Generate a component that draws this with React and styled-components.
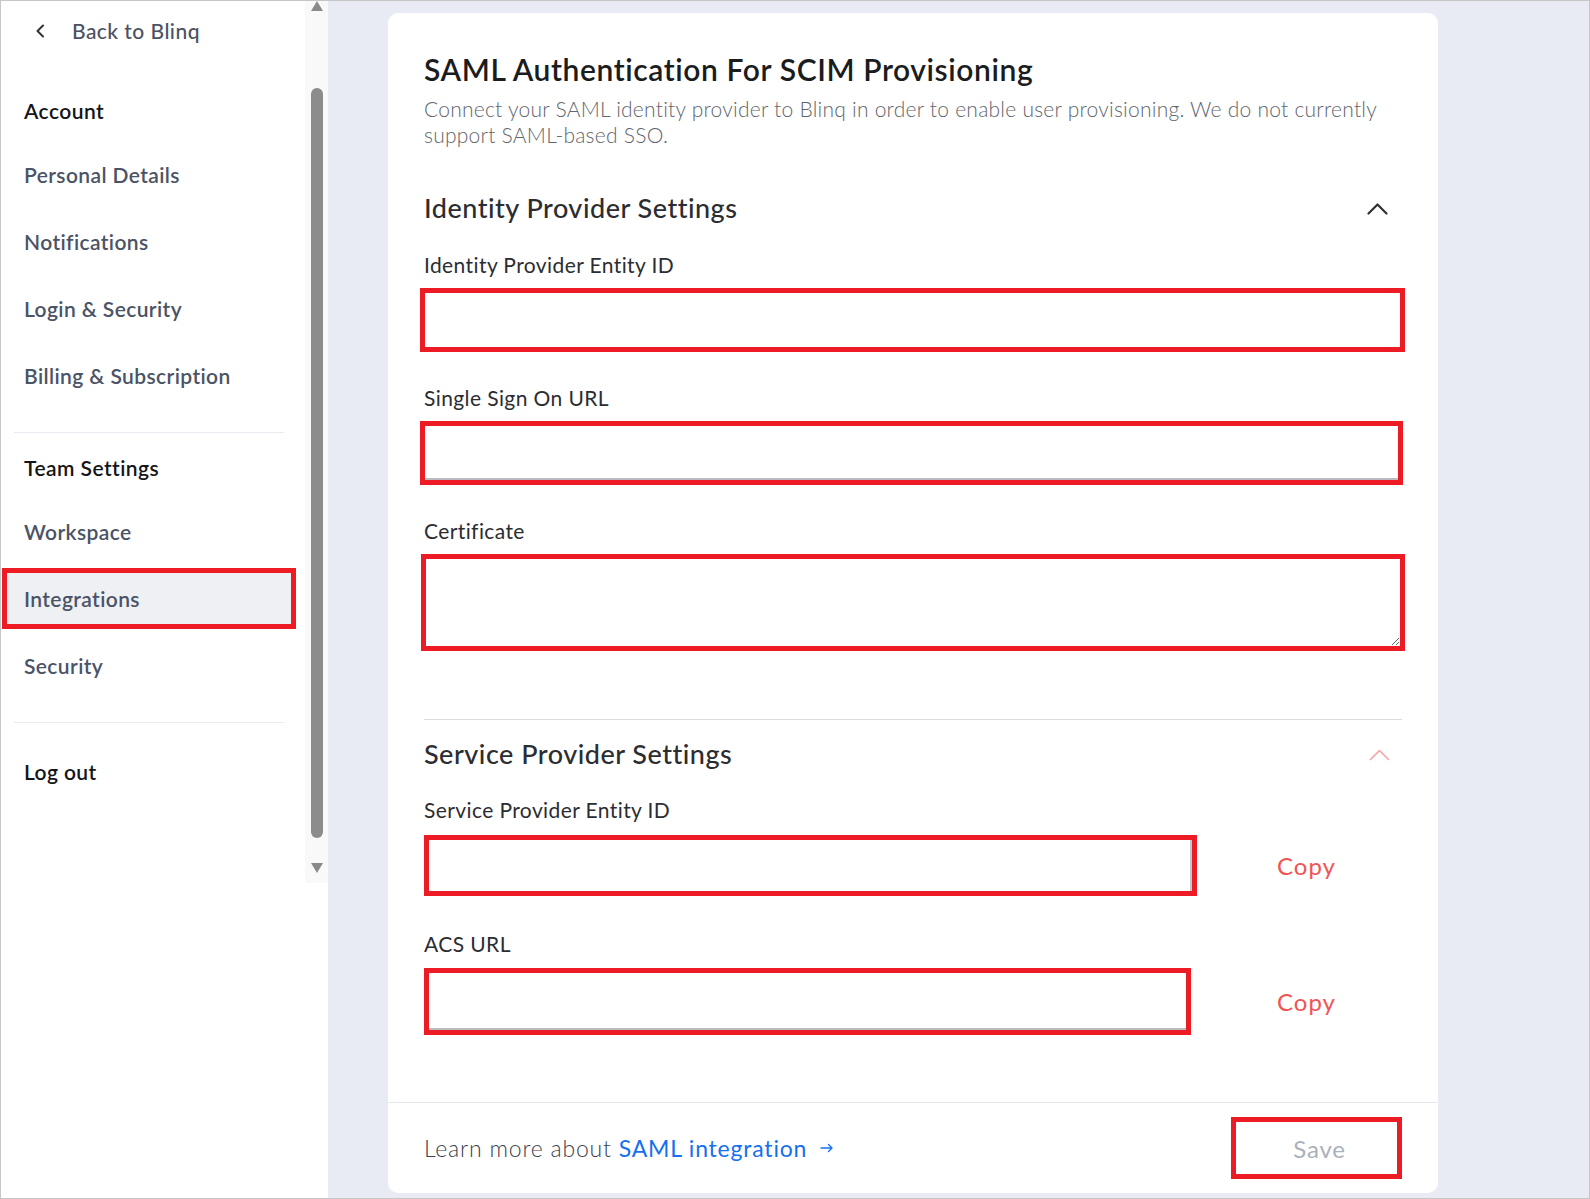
import React from "react";
import styled, { createGlobalStyle } from "styled-components";

const GlobalStyle = createGlobalStyle`
  html, body { margin: 0; padding: 0; background: #fff; }
  body { font-family: Lato, "Noto Sans", sans-serif; }
  *, *::before, *::after { box-sizing: border-box; }
`;

const RED = "#ed1c24";

const Frame = styled.div`
  width: 1590px;
  height: 1199px;
  border: 1px solid #c6c6c6;
  display: flex;
  overflow: hidden;
  background: #e9ebf4;
`;

const Sidebar = styled.aside`
  width: 327px;
  flex-shrink: 0;
  background: #fff;
  display: flex;
  align-items: flex-start;
`;

const Nav = styled.nav`
  width: 304px;
  padding: 18px 21px 0 13px;
  display: flex;
  flex-direction: column;
`;

const BackLink = styled.a`
  display: flex;
  align-items: center;
  gap: 27px;
  padding-left: 21px;
  height: 24px;
  font-size: 21px;
  line-height: 24px;
  font-weight: 500;
  letter-spacing: 0.45px;
  color: #4a5263;
  text-decoration: none;
  margin-bottom: 56px;
`;

const GroupHeading = styled.div`
  padding-left: 10px;
  font-size: 21px;
  line-height: 24px;
  font-weight: 600;
  letter-spacing: 0.45px;
  color: #141518;
  margin-bottom: 26px;
`;

const ItemList = styled.div`
  display: flex;
  flex-direction: column;
  gap: 16px;
`;

const NavItem = styled.div`
  height: 51px;
  margin: 0 -7px;
  padding-left: 17px;
  display: flex;
  align-items: center;
  font-size: 21px;
  line-height: 24px;
  letter-spacing: 0.4px;
  font-weight: 600;
  color: ${(p) => (p.$strong ? "#141518" : "#4b5366")};
  background: ${(p) => (p.$active ? "#eff0f4" : "transparent")};
  outline: ${(p) => (p.$active ? `5px solid ${RED}` : "none")};
`;

const NavDivider = styled.hr`
  border: none;
  height: 1px;
  background: #e9ebf0;
  margin: 31px 0 23px;
`;

const ScrollTrack = styled.div`
  width: 23px;
  height: 882px;
  background: #f9f9f9;
  display: flex;
  flex-direction: column;
  align-items: center;
`;

const ScrollThumb = styled.div`
  width: 12px;
  height: 750px;
  margin: 77px 0 25px;
  border-radius: 6px;
  background: #8c8c8c;
`;

const Main = styled.main`
  flex: 1;
  padding: 12px 0 0 60px;
`;

const Card = styled.section`
  width: 1050px;
  height: 1180px;
  background: #fff;
  border-radius: 10px;
  display: flex;
  flex-direction: column;
`;

const CardBody = styled.div`
  flex: 1;
  padding: 38px 36px 0;
  display: flex;
  flex-direction: column;
`;

const Title = styled.h1`
  margin: 0;
  font-size: 30px;
  line-height: 36px;
  font-weight: 600;
  letter-spacing: 0.6px;
  color: #1b1c1e;
`;

const Description = styled.p`
  margin: 9px 0 0;
  font-size: 21px;
  line-height: 26px;
  font-weight: 300;
  letter-spacing: 0.24px;
  color: #5f666d;
`;

const SectionHeader = styled.div`
  margin-top: ${(p) => p.$mt}px;
  height: 30px;
  display: flex;
  align-items: center;
  justify-content: space-between;
  padding-right: ${(p) => p.$pr}px;
`;

const SectionTitle = styled.h2`
  margin: 0;
  font-size: 27px;
  line-height: 30px;
  font-weight: 500;
  letter-spacing: 0.5px;
  color: #2b2d31;
`;

const Field = styled.div`
  margin-top: ${(p) => p.$mt}px;
  display: flex;
  flex-direction: column;
`;

const Label = styled.label`
  font-size: 21px;
  line-height: 24px;
  font-weight: 400;
  letter-spacing: 0.4px;
  color: #2b2d31;
  margin-bottom: ${(p) => p.$mb || 11}px;
`;

const TextInput = styled.input`
  display: block;
  flex-shrink: 0;
  height: ${(p) => p.$h || 64}px;
  width: ${(p) => p.$w || "calc(100% + 7px)"};
  margin-left: ${(p) => (p.$flush ? 0 : -4)}px;
  border: 5px solid ${RED};
  background: #fff;
  outline: none;
  padding: 0 12px;
  font: inherit;
  box-shadow: ${(p) =>
    p.$edge === "bottom"
      ? "inset 0 -2px 0 #b9bcc0"
      : p.$edge === "right"
      ? "inset -2px 0 0 #c3c6ca"
      : "none"};
`;

const TextArea = styled.textarea`
  display: block;
  height: 97px;
  width: calc(100% + 6px);
  margin-left: -3px;
  border: 5px solid ${RED};
  outline: none;
  padding: 8px 12px;
  font: inherit;
  resize: vertical;
`;

const Divider = styled.hr`
  border: none;
  height: 1px;
  background: #dcdcdc;
  margin: 68px 0 0;
`;

const CopyRow = styled.div`
  display: flex;
  align-items: center;
`;

const CopyButton = styled.button`
  flex: 1;
  padding: 0 0 0 ${(p) => p.$pl || 12}px;
  border: none;
  background: none;
  font-family: inherit;
  font-size: 24px;
  font-weight: 400;
  letter-spacing: 1px;
  color: #f05454;
  text-align: center;
  cursor: pointer;
`;

const Footer = styled.footer`
  height: 91px;
  border-top: 1px solid #e6e8ec;
  padding: 0 36px;
  display: flex;
  align-items: center;
  justify-content: space-between;
`;

const LearnMore = styled.div`
  display: flex;
  align-items: center;
  gap: 7px;
  font-size: 23px;
  font-weight: 300;
  letter-spacing: 0.8px;
  color: #3a414c;
`;

const LinkText = styled.a`
  color: #1570ef;
  font-weight: 400;
  letter-spacing: 0.8px;
  text-decoration: none;
  display: inline-flex;
  align-items: center;
  gap: 13px;
`;

const SaveButton = styled.button`
  width: 171px;
  height: 62px;
  border: 5px solid ${RED};
  background: #fff;
  font-family: inherit;
  font-size: 24px;
  font-weight: 400;
  letter-spacing: 0.8px;
  color: #a9b1ba;
  padding: 0 0 0 6px;
`;

const ChevronLeft = () => (
  <svg width="10" height="14" viewBox="0 0 10 14">
    <polyline points="8,1.5 2.5,7 8,12.5" fill="none" stroke="#2f3238" strokeWidth="2" strokeLinecap="round" strokeLinejoin="round" />
  </svg>
);

const ChevronUp = ({ color, width }) => (
  <svg width="21" height="13" viewBox="0 0 21 13">
    <polyline points="1.5,11.5 10.5,2.5 19.5,11.5" fill="none" stroke={color} strokeWidth={width} strokeLinecap="round" strokeLinejoin="round" />
  </svg>
);

const Arrow = () => (
  <svg width="14" height="10" viewBox="0 0 14 10">
    <path d="M1 5h11M8.5 1.5L12 5l-3.5 3.5" fill="none" stroke="#1570ef" strokeWidth="1.4" strokeLinecap="round" strokeLinejoin="round" />
  </svg>
);

const ScrollArrow = ({ up }) => (
  <svg width="14" height="10" viewBox="0 0 14 10" style={{ display: "block" }}>
    <polygon points={up ? "7,0 13,10 1,10" : "1,0 13,0 7,10"} fill="#8a8a8a" />
  </svg>
);

export default function App() {
  return (
    <>
      <GlobalStyle />
      <Frame>
        <Sidebar>
          <Nav>
            <BackLink>
              <ChevronLeft />
              Back to Blinq
            </BackLink>
            <GroupHeading>Account</GroupHeading>
            <ItemList>
              <NavItem>Personal Details</NavItem>
              <NavItem>Notifications</NavItem>
              <NavItem>Login &amp; Security</NavItem>
              <NavItem>Billing &amp; Subscription</NavItem>
            </ItemList>
            <NavDivider />
            <GroupHeading>Team Settings</GroupHeading>
            <ItemList>
              <NavItem>Workspace</NavItem>
              <NavItem $active>Integrations</NavItem>
              <NavItem>Security</NavItem>
            </ItemList>
            <NavDivider />
            <NavItem $strong>Log out</NavItem>
          </Nav>
          <ScrollTrack>
            <ScrollArrow up />
            <ScrollThumb />
            <ScrollArrow />
          </ScrollTrack>
        </Sidebar>
        <Main>
          <Card>
            <CardBody>
              <Title>SAML Authentication For SCIM Provisioning</Title>
              <Description>
                Connect your SAML identity provider to Blinq in order to enable user provisioning. We do not currently
                support SAML-based SSO.
              </Description>

              <SectionHeader $mt={45} $pr={14}>
                <SectionTitle>Identity Provider Settings</SectionTitle>
                <ChevronUp color="#2f3136" width={2.2} />
              </SectionHeader>
              <Field $mt={30}>
                <Label>Identity Provider Entity ID</Label>
                <TextInput />
              </Field>
              <Field $mt={34}>
                <Label>Single Sign On URL</Label>
                <TextInput $edge="bottom" $w="calc(100% + 5px)" />
              </Field>
              <Field $mt={34}>
                <Label>Certificate</Label>
                <TextArea />
              </Field>

              <Divider />

              <SectionHeader $mt={19} $pr={12}>
                <SectionTitle>Service Provider Settings</SectionTitle>
                <ChevronUp color="#f7a3a6" width={1.6} />
              </SectionHeader>
              <Field $mt={29}>
                <Label $mb={13}>Service Provider Entity ID</Label>
                <CopyRow>
                  <TextInput $edge="right" $h={61} $w="773px" $flush />
                  <CopyButton $pl={14}>Copy</CopyButton>
                </CopyRow>
              </Field>
              <Field $mt={36}>
                <Label $mb={12}>ACS URL</Label>
                <CopyRow>
                  <TextInput $edge="bottom" $h={67} $w="767px" $flush />
                  <CopyButton $pl={20}>Copy</CopyButton>
                </CopyRow>
              </Field>
            </CardBody>
            <Footer>
              <LearnMore>
                Learn more about
                <LinkText>
                  SAML integration
                  <Arrow />
                </LinkText>
              </LearnMore>
              <SaveButton>Save</SaveButton>
            </Footer>
          </Card>
        </Main>
      </Frame>
    </>
  );
}
